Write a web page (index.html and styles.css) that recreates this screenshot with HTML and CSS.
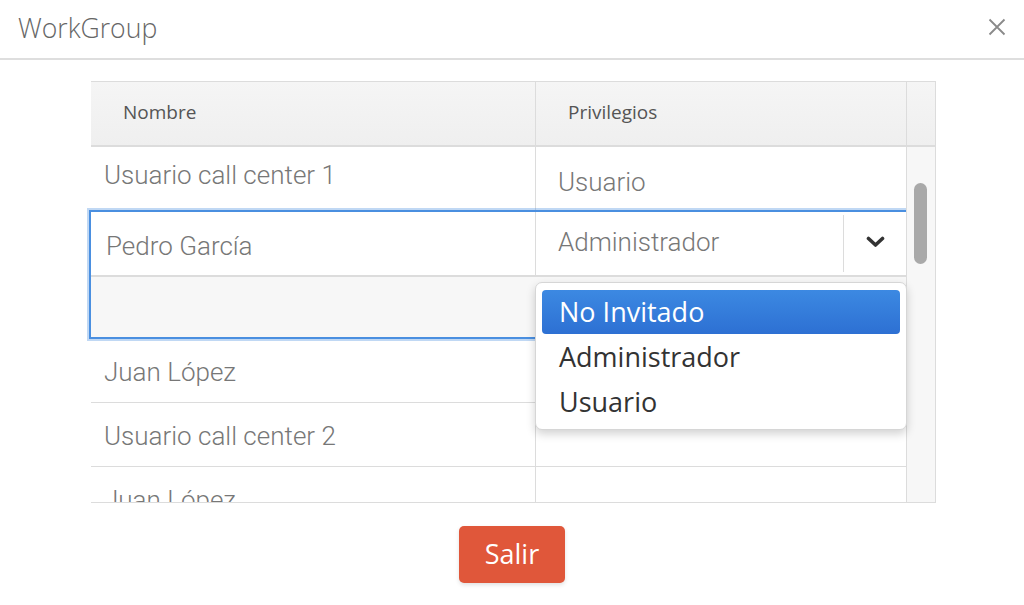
FILE: index.html
```html
<!DOCTYPE html>
<html lang="es">
<head>
<meta charset="utf-8">
<title>WorkGroup</title>
<link rel="stylesheet" href="styles.css">
</head>
<body>
<header class="modal-head">
  <h1 class="modal-title">WorkGroup</h1>
  <button class="close-btn" aria-label="Cerrar">
    <svg width="18" height="18" viewBox="0 0 18 18"><path d="M1.5 1.5 L16.5 16.5 M16.5 1.5 L1.5 16.5" stroke="#8a8a8a" stroke-width="1.8" fill="none"/></svg>
  </button>
</header>

<main class="modal-body">
  <div class="table">
    <div class="thead">
      <div class="th th-name">Nombre</div>
      <div class="th th-priv">Privilegios</div>
      <div class="th th-corner"></div>
    </div>
    <div class="tbody">
      <div class="rows">
        <div class="row row-first">
          <div class="cell name">Usuario call center 1</div>
          <div class="cell priv">Usuario</div>
        </div>
        <div class="row row-selected">
          <div class="sel-top">
            <div class="cell name">Pedro García</div>
            <div class="cell priv select">
              <span class="select-value">Administrador</span>
              <span class="select-arrow">
                <svg width="19" height="12" viewBox="0 0 19 12"><path d="M2.5 2.5 L9.5 9 L16.5 2.5" stroke="#333" stroke-width="3.6" fill="none" stroke-linecap="round" stroke-linejoin="round"/></svg>
              </span>
            </div>
          </div>
          <div class="sel-extra"></div>
        </div>
        <div class="row">
          <div class="cell name">Juan López</div>
          <div class="cell priv"></div>
        </div>
        <div class="row">
          <div class="cell name">Usuario call center 2</div>
          <div class="cell priv"></div>
        </div>
        <div class="row">
          <div class="cell name">Juan López</div>
          <div class="cell priv"></div>
        </div>
      </div>
      <div class="track"><div class="thumb"></div></div>
    </div>

    <ul class="dropdown">
      <li class="opt active">No Invitado</li>
      <li class="opt">Administrador</li>
      <li class="opt">Usuario</li>
    </ul>
  </div>

  <div class="actions">
    <button class="btn-exit">Salir</button>
  </div>
</main>
</body>
</html>
```

FILE: styles.css
```css
* { box-sizing: border-box; }

html, body {
  margin: 0;
  padding: 0;
  background: #fff;
  width: 1024px;
  height: 605px;
  overflow: hidden;
}

body {
  font-family: "Open Sans", "Liberation Sans", sans-serif;
}

/* ---------- header ---------- */
.modal-head {
  height: 60px;
  border-bottom: 2px solid #dedede;
  display: flex;
  align-items: flex-start;
  justify-content: space-between;
}

.modal-title {
  margin: 0;
  padding: 10px 0 0 18px;
  font-size: 26.6px;
  line-height: 36px;
  font-weight: 300;
  color: #666;
}

.close-btn {
  border: 0;
  background: none;
  padding: 0;
  margin: 18px 18px 0 0;
  width: 18px;
  height: 18px;
  display: flex;
}

/* ---------- table ---------- */
.modal-body {
  padding-top: 21px;
}

.table {
  position: relative;
  margin-left: 91px;
  width: 845px;
  border-top: 1px solid #dcdcdc;
  border-right: 1px solid #dcdcdc;
  border-bottom: 1px solid #dcdcdc;
}

.thead {
  display: flex;
  height: 65px;
  background: linear-gradient(#f5f5f5, #efefef);
  border-bottom: 2px solid #dcdcdc;
  font-size: 19px;
  line-height: 24px;
  color: #555;
}

.th {
  padding-top: 18px;
}

.th-name {
  width: 444px;
  padding-left: 32px;
}

.th-priv {
  width: 371px;
  border-left: 1px solid #dcdcdc;
  padding-left: 32px;
}

.th-corner {
  width: 29px;
  border-left: 1px solid #dcdcdc;
}

.tbody {
  display: flex;
  height: 355px;
}

.rows {
  width: 815px;
  height: 355px;
  clip-path: inset(0 -10px 0 -10px);
}

.row {
  display: grid;
  grid-template-columns: 444px 371px;
  height: 64px;
  border-bottom: 1px solid #dcdcdc;
}

.cell {
  font-family: Roboto, "Liberation Sans", sans-serif;
  font-weight: 300;
  font-size: 26px;
  line-height: 30px;
  color: #777;
  white-space: nowrap;
}

.name {
  padding: 18px 0 0 13px;
}

.priv {
  border-left: 1px solid #dcdcdc;
  padding: 18px 0 0 22px;
}

.row-first {
  height: 63px;
  border-bottom: 0;
}

.row-first .name { padding-top: 13px; }
.row-first .priv { padding-top: 20px; }

/* selected row */
.row-selected {
  display: block;
  height: 129px;
  margin: 0 -2px;
  border: 2px solid #4a8fe0;
  box-shadow: 0 0 0 2px rgba(74, 143, 224, 0.35);
  position: relative;
  z-index: 1;
  background: #fff;
}

.sel-top {
  display: grid;
  grid-template-columns: 444px 371px;
  height: 63px;
}

.sel-top .name {
  padding: 19px 0 0 15px;
}

.select {
  display: flex;
  padding: 0;
}

.select-value {
  flex: 1;
  padding: 15px 0 0 22px;
}

.select-arrow {
  width: 63px;
  margin: 3px 0;
  border-left: 1px solid #dcdcdc;
  display: flex;
  align-items: center;
  justify-content: center;
  padding-bottom: 4px;
}

.sel-extra {
  height: 62px;
  background: #f7f7f7;
  border-top: 2px solid #dcdcdc;
}

/* scrollbar */
.track {
  width: 29px;
  height: 355px;
  border-left: 1px solid #dcdcdc;
  background: #f7f7f7;
  position: relative;
}

.thumb {
  position: absolute;
  left: 7px;
  top: 36px;
  width: 13px;
  height: 81px;
  border-radius: 7px;
  background: #a9a9a9;
}

/* dropdown menu */
.dropdown {
  position: absolute;
  left: 444px;
  top: 200px;
  z-index: 5;
  width: 372px;
  height: 148px;
  margin: 0;
  padding: 7px 6px;
  list-style: none;
  background: #fff;
  border: 1px solid #d6d6d6;
  border-radius: 7px;
  box-shadow: 0 4px 10px rgba(0, 0, 0, 0.18);
}

.opt {
  height: 45px;
  line-height: 44px;
  padding-left: 17px;
  font-size: 27px;
  color: #333;
}

.opt.active {
  height: 44px;
  margin-bottom: 1px;
  color: #fff;
  border-radius: 4px;
  background: linear-gradient(#3c89e2, #2d70d3);
}

/* footer button */
.actions {
  display: flex;
  justify-content: center;
  padding-top: 23px;
}

.btn-exit {
  width: 106px;
  height: 57px;
  border: 0;
  border-radius: 5px;
  background: #e0573a;
  color: #fff;
  font-family: "Open Sans", "Liberation Sans", sans-serif;
  font-size: 27px;
  box-shadow: 0 2px 4px rgba(0, 0, 0, 0.12);
  padding: 0 0 2px 0;
}
```
